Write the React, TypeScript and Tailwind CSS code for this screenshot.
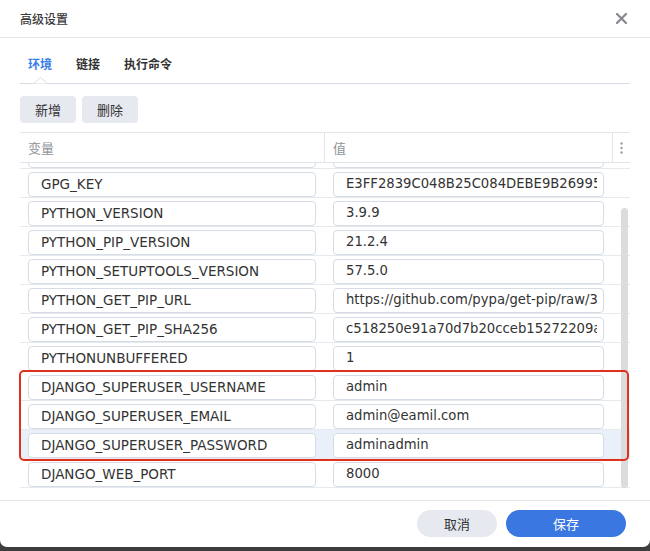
import React from "react";

const rows: { k: string; v: string; hl?: boolean }[] = [
  { k: "PATH", v: "/usr/local/bin:/usr/local/sbin:/usr/sbin:/usr/bin" },
  { k: "GPG_KEY", v: "E3FF2839C048B25C084DEBE9B26995E310250568" },
  { k: "PYTHON_VERSION", v: "3.9.9" },
  { k: "PYTHON_PIP_VERSION", v: "21.2.4" },
  { k: "PYTHON_SETUPTOOLS_VERSION", v: "57.5.0" },
  { k: "PYTHON_GET_PIP_URL", v: "https://github.com/pypa/get-pip/raw/3cb8888cc2869620f57d5d2da64da38f516078c7/public/get-pip.py" },
  { k: "PYTHON_GET_PIP_SHA256", v: "c518250e91a70d7b20cceb15272209a4ded2a0c263ae5776f129e0d9b5674309" },
  { k: "PYTHONUNBUFFERED", v: "1" },
  { k: "DJANGO_SUPERUSER_USERNAME", v: "admin" },
  { k: "DJANGO_SUPERUSER_EMAIL", v: "admin@eamil.com" },
  { k: "DJANGO_SUPERUSER_PASSWORD", v: "adminadmin", hl: true },
  { k: "DJANGO_WEB_PORT", v: "8000" },
];

const latin = "font-['DejaVu_Sans','Noto_Sans_CJK_SC',sans-serif]";
const cjk = "font-['Noto_Sans_CJK_SC',sans-serif]";

export default function App() {
  return (
    <div className="relative w-[650px] h-[551px] overflow-hidden bg-gradient-to-b from-[#8a8a8a] to-[#3c3c3c]">
      <div className={`relative w-[650px] h-[547px] bg-white rounded-b-[7px] flex flex-col ${cjk}`}>
        {/* Header */}
        <div className="h-[38px] border-b border-[#e3e6eb] flex items-center justify-between pl-[20px] pr-[23px] shrink-0">
          <span className="text-[12px] leading-[16px] text-[#3a3a3a] font-medium">高级设置</span>
          <svg width="11" height="11" viewBox="0 0 11 11">
            <path d="M1 1 L10 10 M10 1 L1 10" stroke="#85888e" strokeWidth="2.2" strokeLinecap="round" />
          </svg>
        </div>

        <div className="px-[20px] flex flex-col">
          {/* Tabs */}
          <div className="relative h-[46px] border-b border-[#d8dde5] pt-[18px] pl-[8px] flex gap-[24px]">
            <span className="text-[12px] leading-[16px] font-bold text-[#3a7ee6]">环境</span>
            <span className="text-[12px] leading-[16px] font-bold text-[#333]">链接</span>
            <span className="text-[12px] leading-[16px] font-bold text-[#333]">执行命令</span>
            <svg className="absolute left-[14px] bottom-[-1px]" width="13" height="7" viewBox="0 0 13 7">
              <path d="M0 6.5 L6.5 0.5 L13 6.5 Z" fill="#ffffff" />
              <path d="M0 6.5 L6.5 0.5 L13 6.5" fill="none" stroke="#d8dde5" strokeWidth="1" />
            </svg>
          </div>

          {/* Buttons */}
          <div className="mt-[12px] flex gap-[6px]">
            <button className="w-[56px] h-[27px] rounded-[4px] bg-[#e6e9f0] text-[13px] text-[#333]">新增</button>
            <button className="w-[56px] h-[27px] rounded-[4px] bg-[#e6e9f0] text-[13px] text-[#333]">删除</button>
          </div>

          {/* Table */}
          <div className="mt-[9px] w-[610px]">
            <div className="flex h-[31px] border-t border-b border-[#e1e5eb]">
              <div className="w-[305px] border-r border-[#e1e5eb] pl-[8px] flex items-center text-[13px] text-[#8f9399]">变量</div>
              <div className="w-[288px] border-r border-[#e1e5eb] pl-[8px] flex items-center text-[13px] text-[#8f9399]">值</div>
              <div className="flex-1 flex items-center justify-center">
                <svg width="3" height="12" viewBox="0 0 3 12">
                  <circle cx="1.5" cy="1.5" r="1.2" fill="#9a9ea4" />
                  <circle cx="1.5" cy="6" r="1.2" fill="#9a9ea4" />
                  <circle cx="1.5" cy="10.5" r="1.2" fill="#9a9ea4" />
                </svg>
              </div>
            </div>
            <div className="relative h-[325px] overflow-hidden">
              <div className="mt-[-23px] flex flex-col">
                {rows.map((r) => (
                  <div
                    key={r.k}
                    className={`flex h-[29px] border-b border-[#e6e9ee] items-center ${r.hl ? "bg-[#eaf0fa]" : ""}`}
                  >
                    <div className="w-[305px] pl-[8px]">
                      <input
                        readOnly
                        value={r.k}
                        className={`w-[288px] h-[25px] border border-[#d6dce5] rounded-[4px] bg-white pl-[12px] pr-[6px] pb-[1px] text-[13.5px] text-[#333] outline-none ${latin}`}
                      />
                    </div>
                    <div className="w-[288px] pl-[8px]">
                      <input
                        readOnly
                        value={r.v}
                        className={`w-[271px] h-[25px] border border-[#d6dce5] rounded-[4px] bg-white pl-[12px] pr-[6px] pb-[1px] text-[13.2px] text-[#333] outline-none ${latin}`}
                      />
                    </div>
                  </div>
                ))}
              </div>
              <div className="absolute right-[2px] top-[45px] bottom-0 w-[7px] rounded-full bg-[#dcdcdc]" />
            </div>
          </div>
        </div>

        {/* Footer */}
        <div className="mt-[12px] border-t border-[#e3e6eb] pt-[9px] pr-[24px] flex justify-end gap-[9px]">
          <button className="w-[80px] h-[27px] rounded-full bg-[#e6e9f0] text-[13px] text-[#333]">取消</button>
          <button className="w-[120px] h-[27px] rounded-full bg-[#3a77e0] text-[13px] text-white">保存</button>
        </div>

        {/* Annotation */}
        <div className="absolute left-[19px] top-[370px] w-[610px] h-[91px] border-2 border-[#e0301e] rounded-[5px] pointer-events-none" />
      </div>
    </div>
  );
}
